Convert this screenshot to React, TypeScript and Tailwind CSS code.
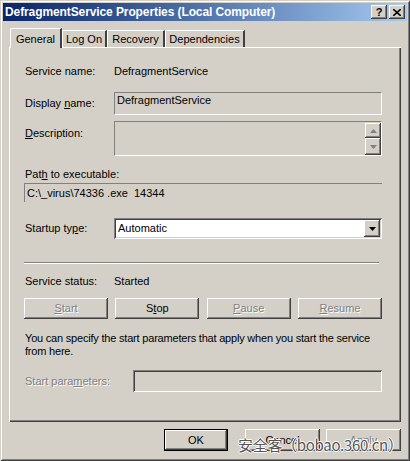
import React from "react";

const raised =
  "bg-[#d4d0c8] shadow-[inset_-1px_-1px_#404040,inset_1px_1px_#ffffff,inset_-2px_-2px_#808080,inset_2px_2px_#d4d0c8]";
const sunken =
  "shadow-[inset_1px_1px_#808080,inset_-1px_-1px_#ffffff,inset_2px_2px_#404040,inset_-2px_-2px_#d4d0c8]";
const disabledText = "text-[#808080] [text-shadow:1px_1px_0_#ffffff]";

function Btn({ children, disabled, className = "" }: { children: React.ReactNode; disabled?: boolean; className?: string }) {
  return (
    <div className={`${raised} h-[21px] w-[84px] flex items-center justify-center ${disabled ? disabledText : ""} ${className}`}>
      {children}
    </div>
  );
}

function Tri({ down, color = "#000" }: { down?: boolean; color?: string }) {
  return (
    <svg width="7" height="4" viewBox="0 0 7 4">
      {down ? <polygon points="0,0 7,0 3.5,4" fill={color} /> : <polygon points="0,4 7,4 3.5,0" fill={color} />}
    </svg>
  );
}

export default function App() {
  return (
    <div
      className="relative w-[410px] h-[461px] bg-[#d4d0c8] text-[11px] leading-[13px] text-black p-[3px] shadow-[inset_1px_1px_#d4d0c8,inset_-1px_-1px_#404040,inset_2px_2px_#ffffff,inset_-2px_-2px_#808080] flex flex-col"
      style={{ fontFamily: '"Liberation Sans", Arial, sans-serif' }}
    >
      {/* Title bar */}
      <div className="h-[18px] bg-gradient-to-r from-[#0a246a] to-[#a6caf0] flex items-center pl-[2px] pr-[2px]">
        <div className="flex-1 text-white font-bold text-[12px] tracking-[-0.1px] whitespace-nowrap">DefragmentService Properties (Local Computer)</div>
        <div className={`${raised} w-[16px] h-[14px] flex items-center justify-center font-bold text-[11px] leading-[11px]`}>?</div>
        <div className={`${raised} w-[16px] h-[14px] ml-[2px] flex items-center justify-center`}>
          <svg width="8" height="7" viewBox="0 0 8 7">
            <path d="M0 0 L8 7 M8 0 L0 7" stroke="#000" strokeWidth="1.6" />
          </svg>
        </div>
      </div>

      {/* Tabs */}
      <div className="mt-[7px] ml-[7px] flex items-end h-[19px] relative z-10">
        <div className="h-[20px] w-[52px] mb-[-1px] bg-[#d4d0c8] border-l border-t border-white border-r-[2px] border-r-[#404040] rounded-tl-[2px] flex items-start justify-center pt-[4px]">
          General
        </div>
        <div className="h-[17px] w-[45px] border-l border-t border-white border-r-[2px] border-r-[#404040] flex items-center justify-center">Log On</div>
        <div className="h-[17px] w-[58px] border-l border-t border-white border-r-[2px] border-r-[#404040] flex items-center justify-center">Recovery</div>
        <div className="h-[17px] w-[80px] border-l border-t border-white border-r-[2px] border-r-[#404040] flex items-center justify-center">Dependencies</div>
      </div>

      {/* Panel */}
      <div className="ml-[6px] w-[392px] h-[375px] shadow-[inset_1px_1px_#ffffff,inset_-1px_-1px_#404040,inset_-2px_-2px_#808080] flex flex-col pl-[15px] pr-[19px]">
        <div className="mt-[18px] h-[13px] flex">
          <div className="w-[90px] pl-[1px]">Service name:</div>
          <div>DefragmentService</div>
        </div>

        <div className="mt-[14px] h-[23px] flex items-center">
          <div className="w-[90px] pl-[1px]">
            Display <u>n</u>ame:
          </div>
          <div className="flex-1 h-[23px] border-t border-l border-[#808080] border-b border-r border-b-white border-r-white pl-[2px] pt-[1px] self-start">
            DefragmentService
          </div>
        </div>

        <div className="mt-[6px] h-[35px] flex">
          <div className="w-[90px] pl-[1px] pt-[6px]">
            <u>D</u>escription:
          </div>
          <div className="flex-1 h-[35px] border-t border-l border-[#808080] border-b border-r border-b-white border-r-white flex justify-end">
            <div className="flex flex-col justify-between pt-[1px] pb-0">
              <div className={`${raised} w-[16px] h-[15px] flex items-center justify-center [filter:drop-shadow(1px_1px_0_#fff)]`}>
                <Tri color="#808080" />
              </div>
              <div className={`${raised} w-[16px] h-[17px] flex items-center justify-center [filter:drop-shadow(1px_1px_0_#fff)]`}>
                <Tri down color="#808080" />
              </div>
            </div>
          </div>
        </div>

        <div className="mt-[12px] h-[13px] pl-[1px]">
          Pat<u>h</u> to executable:
        </div>

        <div className="mt-[2px] h-[19px] border-t border-l border-[#808080] pl-[2px] flex items-center">
          C:\_virus\74336 .exe&nbsp; 14344
        </div>

        <div className="mt-[16px] h-[21px] flex items-center">
          <div className="w-[90px] pl-[1px]">
            Startup ty<u>p</u>e:
          </div>
          <div className={`flex-1 h-[21px] bg-white ${sunken} flex items-center pl-[4px] pr-[2px]`}>
            <div className="flex-1">Automatic</div>
            <div className={`${raised} w-[16px] h-[17px] flex items-center justify-center`}>
              <Tri down />
            </div>
          </div>
        </div>

        <div className="mt-[23px] h-[2px] w-[355px] border-t border-[#808080] border-b border-b-white" />

        <div className="mt-[11px] h-[13px] flex">
          <div className="w-[90px] pl-[1px]">Service status:</div>
          <div>Started</div>
        </div>

        <div className="mt-[10px] flex justify-between">
          <Btn disabled>
            <u>S</u>tart
          </Btn>
          <Btn>
            S<u>t</u>op
          </Btn>
          <Btn disabled>
            <u>P</u>ause
          </Btn>
          <Btn disabled>
            <u>R</u>esume
          </Btn>
        </div>

        <div className="mt-[13px] pl-[1px] whitespace-nowrap tracking-[-0.2px]">
          You can specify the start parameters that apply when you start the service
          <br />
          from here.
        </div>

        <div className="mt-[12px] h-[22px] flex items-center">
          <div className={`w-[109px] pl-[1px] ${disabledText}`}>
            Start para<u>m</u>eters:
          </div>
          <div className={`flex-1 h-[22px] ${sunken}`} />
        </div>
      </div>

      {/* Bottom buttons */}
      <div className="mt-[7px] flex pl-[161px]">
        <div className="h-[22px] w-[64px] border border-black flex">
          <div className={`${raised} flex-1 flex items-center justify-center`}>OK</div>
        </div>
        <Btn className="!w-[75px] !h-[22px] ml-[17px]">Cancel</Btn>
        <Btn disabled className="!w-[75px] !h-[22px] ml-[6px]">
          <u>A</u>pply
        </Btn>
      </div>

      {/* Watermark */}
      <div
        className="absolute left-[238px] top-[436px] whitespace-nowrap text-[15px] leading-[18px] text-[#555555] [text-shadow:1px_0_0_#fff,-1px_0_0_#fff,0_1px_0_#fff,0_-1px_0_#fff] tracking-[-0.3px]"
        style={{ fontFamily: '"Noto Sans CJK SC", "Liberation Sans", sans-serif' }}
      >
        安全客（bobao.360.cn）
      </div>
    </div>
  );
}
